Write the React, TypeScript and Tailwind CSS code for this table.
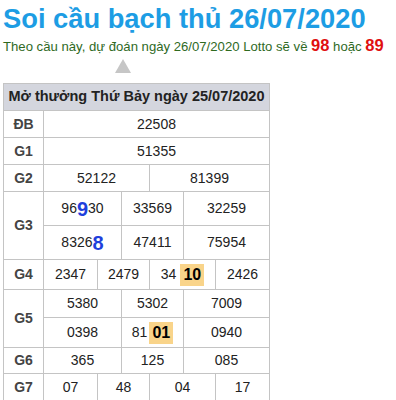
import React from 'react'

const cell = 'flex items-center justify-center bg-white text-[14px] text-[#222]'
const label = 'flex items-center justify-center bg-white text-[14px] font-bold text-[#444]'

function Hot({ children, gap }: { children: React.ReactNode; gap: string }) {
    return (
        <span className={`${gap} inline-block bg-[#f9d48a] px-[3px] text-[16px] font-bold leading-[22px] text-black`}>
            {children}
        </span>
    )
}

function Blue({ children }: { children: React.ReactNode }) {
    return <span className="text-[20px] font-bold leading-none text-[#1f3fdc]">{children}</span>
}

export default function App() {
    return (
        <div className="h-[400px] w-[396px] overflow-hidden bg-white px-[3px] font-['Liberation_Sans',Arial,sans-serif]">
            <h1 className="pt-[3px] text-[27.3px] font-bold leading-[32px] text-[#1d9de4]">
                Soi cầu bạch thủ 26/07/2020
            </h1>
            <p className="mt-[2px] text-[13.15px] leading-[18px] text-[#2f6a1f]">
                Theo cầu này, dự đoán ngày 26/07/2020 Lotto sẽ về{' '}
                <span className="text-[16.5px] font-bold leading-none text-[#e01010]">98</span> hoặc{' '}
                <span className="text-[16.5px] font-bold leading-none text-[#e01010]">89</span>
            </p>
            <svg className="ml-[112px] mt-[3px] block" width="16" height="14" viewBox="0 0 16 14">
                <polygon points="8,0 16,14 0,14" fill="#c6c6c6" />
            </svg>

            <div className="mt-[10px] grid w-[267px] grid-cols-[39px_53px_23px_27px_33px_31px_53px] grid-rows-[26px_26px_26px_26px_33px_33px_29px_27px_29px_25px_26px] gap-px border border-[#c4c4c4] bg-[#c4c4c4]">
                <div className="col-span-7 flex items-center justify-center bg-[#d4d6de] text-[14.5px] font-bold text-[#222]">
                    Mở thưởng Thứ Bảy ngày 25/07/2020
                </div>

                <div className={label}>ĐB</div>
                <div className={`${cell} col-span-6`}>22508</div>

                <div className={label}>G1</div>
                <div className={`${cell} col-span-6`}>51355</div>

                <div className={label}>G2</div>
                <div className={`${cell} col-span-3`}>52122</div>
                <div className={`${cell} col-span-3`}>81399</div>

                <div className={`${label} row-span-2`}>G3</div>
                <div className={`${cell} col-span-2`}>
                    96<Blue>9</Blue>30
                </div>
                <div className={`${cell} col-span-2`}>33569</div>
                <div className={`${cell} col-span-2`}>32259</div>
                <div className={`${cell} col-span-2`}>
                    8326<Blue>8</Blue>
                </div>
                <div className={`${cell} col-span-2`}>47411</div>
                <div className={`${cell} col-span-2`}>75954</div>

                <div className={label}>G4</div>
                <div className={cell}>2347</div>
                <div className={`${cell} col-span-2`}>2479</div>
                <div className={`${cell} col-span-2`}>
                    34<Hot gap="ml-[4px]">10</Hot>
                </div>
                <div className={cell}>2426</div>

                <div className={`${label} row-span-2`}>G5</div>
                <div className={`${cell} col-span-2`}>5380</div>
                <div className={`${cell} col-span-2`}>5302</div>
                <div className={`${cell} col-span-2`}>7009</div>
                <div className={`${cell} col-span-2`}>0398</div>
                <div className={`${cell} col-span-2`}>
                    81<Hot gap="ml-[2px]">01</Hot>
                </div>
                <div className={`${cell} col-span-2`}>0940</div>

                <div className={label}>G6</div>
                <div className={`${cell} col-span-2`}>365</div>
                <div className={`${cell} col-span-2`}>125</div>
                <div className={`${cell} col-span-2`}>085</div>

                <div className={label}>G7</div>
                <div className={cell}>07</div>
                <div className={`${cell} col-span-2`}>48</div>
                <div className={`${cell} col-span-2`}>04</div>
                <div className={cell}>17</div>
            </div>
        </div>
    )
}
